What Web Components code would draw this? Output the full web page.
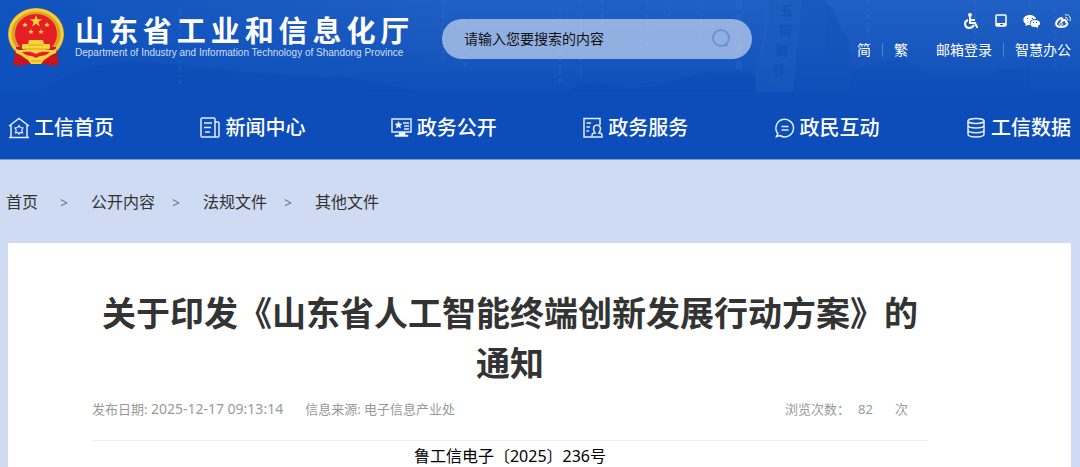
<!DOCTYPE html>
<html lang="zh-CN">
<head>
<meta charset="utf-8">
<meta name="viewport" content="width=device-width, initial-scale=1">
<title>山东省工业和信息化厅</title>
<style>
    body {
        margin: 0;
        background-color: #cfdbf2;
        color: #333;
        font-family: "Noto Sans", "Noto Sans CJK SC", sans-serif;
        font-size: 16px;
    }
</style>
</head>
<body>
<app-header>
    <app-brand slot="brand" name="山东省工业和信息化厅">Department of Industry and Information Technology of Shandong Province</app-brand>
    <app-search slot="search" placeholder="请输入您要搜索的内容"></app-search>
    <app-tools slot="tools"></app-tools>
    <app-nav slot="nav">
        <app-nav-item icon="home">工信首页</app-nav-item>
        <app-nav-item icon="news">新闻中心</app-nav-item>
        <app-nav-item icon="open">政务公开</app-nav-item>
        <app-nav-item icon="service">政务服务</app-nav-item>
        <app-nav-item icon="chat">政民互动</app-nav-item>
        <app-nav-item icon="data">工信数据</app-nav-item>
    </app-nav>
</app-header>
<main>
    <app-breadcrumb items="首页,公开内容,法规文件,其他文件"></app-breadcrumb>
    <app-article date="2025-12-17 09:13:14" source="电子信息产业处" views="82">
        <span slot="title">关于印发《山东省人工智能终端创新发展行动方案》的通知</span>
        鲁工信电子〔2025〕236号
    </app-article>
</main>

<script>
const navIcons = {
    home: `<path d="M1 9 11 1.500 21 9M3 8v12.500M19 8v12.500M1 20.500h20"/><path stroke-width="1.200" d="m11 8.500 1.300 2 2.700.5-1.200 2.200.7 2.800-2.200-.5L11 17l-1.300-1.500-2.200.5.7-2.800L7 11l2.700-.5z"/>`,
    news: `<path d="M16 20H3a1 1 0 0 1-1-1V2a1 1 0 0 1 1-1h12a1 1 0 0 1 1 1v18zM16 5h3a1 1 0 0 1 1 1v13a1 1 0 0 1-1 1h-3M5 6h8M5 10.500h7M6 15h5"/>`,
    open: `<path d="M1 2h19v13H1zM12 6h6M13 9h5M13 12h5"/><path fill="#fff" d="m7.500 4.500 1 2.200 2.400.3-1.800 1.600.5 2.400-2.100-1.200L5.400 11l.5-2.400L4.100 7l2.400-.3zM8 15.500h6V18h3v1.500H4V18h4z" stroke-width=".5"/>`,
    service: `<path d="M10 20H2V1.500h16V8M4.500 6H9M4.500 10H8M4.500 14H7M13 16c-3-5-1-8 2-8s5 3 2 8c3 0 3 1 3 4H10c0-3 0-4 3-4z"/>`,
    chat: `<path d="M3.800 16.500a8.800 8.800 0 1 1 2.200 2L2.500 19.500zM7.500 9.500h7M7.500 13h7"/>`,
    data: `<ellipse cx="11" cy="4" rx="8" ry="2.500"/><path d="M3 4v4c0 4 16 4 16 0V4M3 8v4.700c0 4 16 4 16 0V8M3 12.500v4.500c0 4 16 4 16 0v-4.500"/>`
};

class AppHeader extends HTMLElement {
    constructor() {
        super();
        this.attachShadow({ mode: "open" });
        this.shadowRoot.innerHTML = `
        <style>
            :host {
                display: block;
                position: relative;
                background-color: #0d4db9;
                border-bottom: 1px solid #6f9be0;
                color: #fff;
            }

            .scene {
                position: absolute;
                left: 0;
                top: 0;
                width: 100%;
                height: 92px;
            }

            .top {
                position: relative;
                display: grid;
                grid-template-columns: 434px 310px 1fr;
                align-items: start;
                height: 96px;
                padding: 0 9px 0 8px;
            }

            nav {
                position: relative;
            }
        </style>
        <header>
            <svg class="scene" viewBox="0 0 1080 92" preserveAspectRatio="xMidYMin slice" aria-hidden="true">
                <defs>
                    <linearGradient id="sky" x2="0" y2="1">
                        <stop offset="0" stop-color="#205fc3"/>
                        <stop offset=".5" stop-color="#1959bf"/>
                        <stop offset="1" stop-color="#0e4eba"/>
                    </linearGradient>
                    <linearGradient id="left">
                        <stop offset="0" stop-color="#0d50bc" stop-opacity=".8"/>
                        <stop offset="1" stop-color="#0d50bc" stop-opacity="0"/>
                    </linearGradient>
                </defs>
                <path fill="url(#sky)" d="M0 0h1080v92H0z"/>
                <path fill="url(#left)" d="M0 0h460v92H0z"/>
                <path fill="#0b46b3" opacity=".35" d="M40 92c30-20 60-32 100-30s60 6 110 10 50 5 80 5 60 8 90 15zM568 92c20-13 30-10 55-4 50 2 60-18 110-17 30 3 40 21 80 21z"/>
                <path fill="#0f4fb6" opacity=".5" d="M826 92V5l7 3 8 22 8 10 5 52z"/>
                <path fill="#1050b8" opacity=".4" d="m755 92 14-68V0h57v92z"/>
                <path fill="#2867c5" opacity=".3" d="m755 80 14-80h33l-9 92h-38z"/>
                <path fill="#0d4db9" opacity=".4" d="M850 92V72l25-9 30-4 30 18 45 2 20-10h30v23z"/>
                <g fill="#0f4db0" opacity=".7" font-family="Noto Sans CJK TC, sans-serif" font-size="13" font-weight="500">
                    <text x="780" y="15">五</text>
                    <text x="779" y="35">嶽</text>
                    <text x="775" y="55">獨</text>
                    <text x="772" y="75">尊</text>
                </g>
                <g stroke="#3c7bd5" fill="none" stroke-width="3" stroke-dasharray="5 4 2 3" opacity=".2">
                    <path d="M443 0v65M465 20v50M560 8v75M581 0v75M602 0v30M647 0v54M669 5v10M701 5v32M868 0v35M975 0v42M1030 3v22M1055 8v60M180 10v74"/>
                    <path stroke-width="6" stroke-dasharray="9 6" d="M739 0v72"/>
                </g>
            </svg>
            <div class="top">
                <slot name="brand"></slot>
                <slot name="search"></slot>
                <slot name="tools"></slot>
            </div>
            <nav><slot name="nav"></slot></nav>
        </header>
        `;
    }
}

class AppBrand extends HTMLElement {
    constructor() {
        super();
        this.attachShadow({ mode: "open" });
        this.shadowRoot.innerHTML = `
        <style>
            :host {
                display: flex;
                gap: 11px;
                padding-top: 7px;
            }

            svg {
                width: 56px;
                height: 60px;
                flex: none;
            }

            .names {
                display: grid;
                align-content: start;
                width: max-content;
                padding-top: 8px;
            }

            strong {
                width: 0;
                min-width: 100%;
                font-size: 29px;
                font-weight: 700;
                line-height: 32px;
                white-space: nowrap;
                text-align-last: justify;
            }

            small {
                padding-right: 6px;
                font-family: "Liberation Sans", Arial, sans-serif;
                font-size: 10px;
                line-height: 12px;
                color: #cfdff8;
            }
        </style>
        <svg viewBox="0 0 56 60" aria-hidden="true">
            <ellipse cx="28" cy="27" rx="28" ry="26" fill="#dba024"/>
            <ellipse cx="28" cy="27" rx="26" ry="24" fill="none" stroke="#f4cd3a" stroke-width="3"/>
            <path fill="#c9141c" d="M8 40 5 57l7 2 7-2h18l7 2 7-2-3-17z"/>
            <ellipse cx="28" cy="27" rx="21" ry="20" fill="#e71d26"/>
            <g fill="#f9d43d">
                <path d="m28 8 1.500 4.300h4.600l-3.700 2.800 1.400 4.400-3.800-2.700-3.800 2.700 1.400-4.400-3.700-2.800h4.600z"/>
                <path id="s" d="m17 15 .8 2h2l-1.600 1.300.6 2-1.800-1.200-1.800 1.200.6-2-1.600-1.300h2z"/>
                <use href="#s" x="22"/><use href="#s" x="6" y="7"/><use href="#s" x="16" y="7"/>
                <path d="M21 33h14l1 4h6v5H14v-5h6z"/>
                <path d="M7 41c6 4 8 1 13 1h16c5 0 7 3 13-1l-1 5c-6 2-8 5-12 7l-3 4H23l-3-4c-4-2-6-5-12-7z"/>
            </g>
            <path fill="#e71d26" d="M14 45c5 0 8-1 14 2 6-3 9-2 14-2-3 3-7 4-10 4l-4 2-4-2c-3 0-7-1-10-4z"/>
            <path fill="none" stroke="#dba024" d="M20 38h16M15 42h26M23 54h10"/>
        </svg>
        <div class="names">
            <strong></strong>
            <small><slot></slot></small>
        </div>
        `;
        this.shadowRoot.querySelector('strong').textContent = this.getAttribute('name');
    }
}

class AppSearch extends HTMLElement {
    constructor() {
        super();
        this.attachShadow({ mode: "open" });
        this.shadowRoot.innerHTML = `
        <style>
            :host {
                display: block;
                padding-top: 19px;
            }

            form {
                display: flex;
                align-items: center;
                height: 40px;
                padding: 0 21px 2px 22px;
                border-radius: 20px;
                background-color: rgba(255, 255, 255, .52);
                box-sizing: border-box;
            }

            input {
                flex: 1;
                min-width: 0;
                padding: 0;
                border: 0;
                outline: 0;
                background: none;
                font: inherit;
                font-size: 14px;
                color: #111;
            }

            input::placeholder {
                color: #111;
                opacity: 1;
            }

            button {
                display: flex;
                padding: 0;
                border: 0;
                background: none;
            }
        </style>
        <form>
            <input type="text" aria-label="搜索">
            <button type="submit" aria-label="提交搜索">
                <svg width="20" height="20" fill="none" stroke="#6a93d6" stroke-width="2" aria-hidden="true"><circle cx="10" cy="10" r="8"/><path d="m14 16 2 2"/></svg>
            </button>
        </form>
        `;
        this.shadowRoot.querySelector('input').placeholder = this.getAttribute('placeholder');
        this.shadowRoot.querySelector('form').addEventListener('submit', (e) => {
            e.preventDefault();
        });
    }
}

class AppTools extends HTMLElement {
    constructor() {
        super();
        this.attachShadow({ mode: "open" });
        this.shadowRoot.innerHTML = `
        <style>
            :host {
                display: flex;
                flex-direction: column;
                align-items: flex-end;
                gap: 10px;
                padding-top: 12px;
                font-size: 14px;
                line-height: 20px;
            }

            div {
                display: flex;
                align-items: center;
            }

            .icons {
                gap: 14px;
                height: 18px;
            }

            a {
                color: #fff;
                text-decoration: none;
            }

            .icons a {
                display: flex;
            }

            i {
                width: 1px;
                height: 14px;
                margin: 0 11px;
                background-color: #3d8ad9;
            }

            .mail {
                margin-left: 28px;
            }
        </style>
        <div class="icons">
            <a href="#" aria-label="无障碍"><svg width="16" height="18" fill="none" stroke="#fff" stroke-width="2"><circle cx="7" cy="3" r="1" fill="#fff"/><path d="M7 5v6h5l2 4h1M8 8h4M5 8c-5 2-3 8 1 8 3 0 4-1 5-3"/></svg></a>
            <a href="#" aria-label="手机版"><svg width="16" height="18" fill="none" stroke="#fff"><rect x="3" y="3" width="10" height="11" rx="1" stroke-width="1.500"/><path d="M3 12.500h10" stroke-width="3"/><path d="M7 12.500h3" stroke="#1c5cc2"/></svg></a>
            <a href="#" aria-label="微信"><svg width="18" height="18" fill="#fff"><path d="M7 3c-8 0-8 7-4 9l-1 2 3-1h2c-1-3 1-6 6-6 0-2-3-4-6-4z"/><path d="M12 8c-6 0-6 7-1 7h2l2 1v-2c4-2 2-6-3-6z"/><path fill="#1c5cc2" d="M4 6h1v1H4zM9 6h1v1H9zM10 10h1v1h-1zM13 10h1v1h-1z"/></svg></a>
            <a href="#" aria-label="微博"><svg width="16" height="18" fill="none" stroke="#fff"><path stroke-width="2" d="M6 6c-6 3-7 9 0 9 6 0 8-4 5-5 0-3-2-2-4-1 1-2 0-3-1-3z"/><circle cx="6" cy="12" r="1.500"/><path d="M10 3c4-1 6 2 5 6M10 5.500c2 0 3 1 2.500 3"/></svg></a>
        </div>
        <div>
            <a href="#">简</a><i></i><a href="#">繁</a>
            <a class="mail" href="#">邮箱登录</a><i></i><a href="#">智慧办公</a>
        </div>
        `;
    }
}

class AppNav extends HTMLElement {
    constructor() {
        super();
        this.attachShadow({ mode: "open" });
        this.shadowRoot.innerHTML = `
        <style>
            :host {
                display: flex;
                justify-content: space-between;
                align-items: center;
                height: 63px;
                padding: 0 9px 0 8px;
            }
        </style>
        <slot></slot>
        `;
    }
}

class AppNavItem extends HTMLElement {
    constructor() {
        super();
        this.attachShadow({ mode: "open" });
        this.shadowRoot.innerHTML = `
        <style>
            :host {
                display: block;
            }

            a {
                display: flex;
                align-items: center;
                gap: 4px;
                color: #fff;
                font-size: 20px;
                font-weight: 500;
                line-height: 28px;
                text-decoration: none;
            }
        </style>
        <a href="#">
            <svg width="22" height="22" fill="none" stroke="#e3ecfb" stroke-width="1.500" aria-hidden="true">${navIcons[this.getAttribute('icon')]}</svg>
            <slot></slot>
        </a>
        `;
    }
}

class AppBreadcrumb extends HTMLElement {
    constructor() {
        super();
        this.attachShadow({ mode: "open" });
        this.shadowRoot.innerHTML = `
        <style>
            :host {
                display: block;
                padding: 30px 6px 29px;
                line-height: 24px;
            }

            ol {
                display: flex;
                height: 24px;
                margin: 0;
                padding: 0;
                list-style: none;
            }

            a {
                color: #333;
                text-decoration: none;
            }

            li:first-child {
                margin-right: 5px;
            }

            li + li::before {
                content: ">";
                display: inline-block;
                width: 48px;
                padding-left: 17px;
                box-sizing: border-box;
                color: #777;
                font-size: 14px;
            }
        </style>
        <ol></ol>
        `;
        const list = this.shadowRoot.querySelector('ol');
        this.getAttribute('items').split(',').forEach(text => {
            const item = document.createElement('li');
            const link = document.createElement('a');
            link.href = '#';
            link.textContent = text;
            item.appendChild(link);
            list.appendChild(item);
        });
    }
}

class AppArticle extends HTMLElement {
    constructor() {
        super();
        this.attachShadow({ mode: "open" });
        this.shadowRoot.innerHTML = `
        <style>
            :host {
                display: block;
                margin: 0 9px 0 8px;
                padding: 45px 143px 0 84px;
                background-color: #fff;
            }

            h1 {
                margin: 0;
                font-size: 34px;
                line-height: 50px;
                text-align: center;
            }

            .meta {
                display: flex;
                gap: 22px;
                padding: 11px 20px 21px 0;
                border-bottom: 1px solid #eee;
                color: #999;
                font-size: 13px;
                line-height: 20px;
            }

            time {
                font-size: 14px;
            }

            .views {
                display: flex;
                margin-left: auto;
            }

            .views b {
                margin: 0 22px 0 8px;
                font-weight: 400;
            }

            .text {
                margin: 4px 0 0;
                color: #000;
                line-height: 22px;
                text-align: center;
            }
        </style>
        <article>
            <h1><slot name="title"></slot></h1>
            <div class="meta">
                <span>发布日期: <time>${this.getAttribute('date')}</time></span>
                <span>信息来源: ${this.getAttribute('source')}</span>
                <span class="views">浏览次数：<b>${this.getAttribute('views')}</b>次</span>
            </div>
            <p class="text"><slot></slot></p>
        </article>
        `;
    }
}

customElements.define("app-header", AppHeader);
customElements.define("app-brand", AppBrand);
customElements.define("app-search", AppSearch);
customElements.define("app-tools", AppTools);
customElements.define("app-nav", AppNav);
customElements.define("app-nav-item", AppNavItem);
customElements.define("app-breadcrumb", AppBreadcrumb);
customElements.define("app-article", AppArticle);
</script>
</body>
</html>
